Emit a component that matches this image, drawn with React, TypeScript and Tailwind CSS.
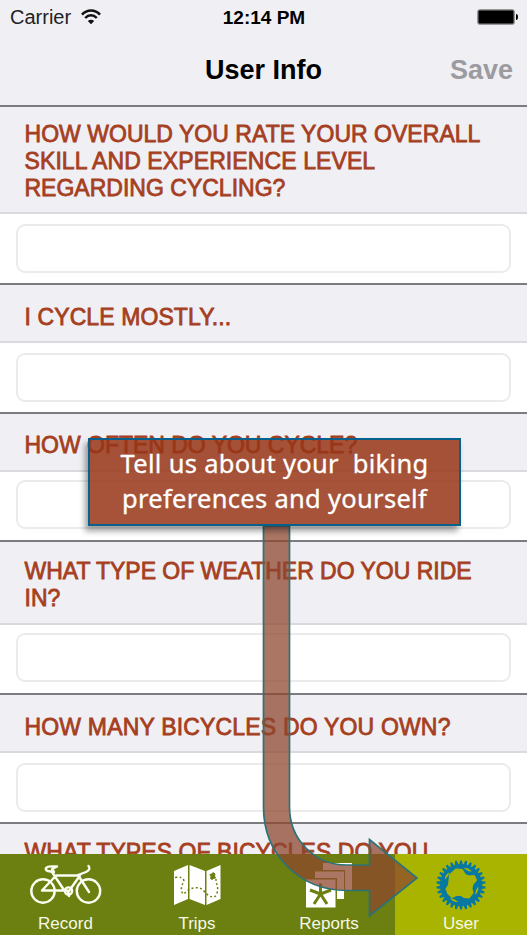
import React from "react";

type Line = { text: string; tracking: string };

type Question = {
  lines: Line[];
  band: string;
  row: string;
};

const QUESTIONS: Question[] = [
  {
    lines: [
      { text: "HOW WOULD YOU RATE YOUR OVERALL", tracking: "tracking-[0.03px]" },
      { text: "SKILL AND EXPERIENCE LEVEL", tracking: "tracking-[0.1px]" },
      { text: "REGARDING CYCLING?", tracking: "tracking-[0.01px]" },
    ],
    band: "h-[107px] pt-[14px]",
    row: "h-[71px] pt-[10px]",
  },
  {
    lines: [{ text: "I CYCLE MOSTLY...", tracking: "tracking-[0.1px]" }],
    band: "h-[58px] pt-[19px]",
    row: "h-[71px] pt-[10px]",
  },
  {
    lines: [{ text: "HOW OFTEN DO YOU CYCLE?", tracking: "tracking-[-0.02px]" }],
    band: "h-[58px] pt-[18px]",
    row: "h-[70px] pt-[8px]",
  },
  {
    lines: [
      { text: "WHAT TYPE OF WEATHER DO YOU RIDE", tracking: "tracking-[-0.02px]" },
      { text: "IN?", tracking: "tracking-normal" },
    ],
    band: "h-[83px] pt-[16px]",
    row: "h-[70px] pt-[8px]",
  },
  {
    lines: [{ text: "HOW MANY BICYCLES DO YOU OWN?", tracking: "tracking-[0.18px]" }],
    band: "h-[58px] pt-[19px]",
    row: "h-[71px] pt-[10px]",
  },
];

const HEADING =
  "bg-[#efeff4] pl-[24.5px] text-[23px] leading-[27px] text-[#a63f1f] whitespace-nowrap [-webkit-text-stroke:0.8px_#a63f1f]";

function StatusBar() {
  return (
    <div className="grid h-[35px] grid-cols-3 items-center pr-[9px] pl-[10px] text-black">
      <div className="flex items-center gap-[10px]">
        <span className="-mt-[2px] text-[20px] leading-none text-[#222]">Carrier</span>
        <svg className="-mt-[2px]" width="20" height="16" viewBox="0 0 20 16" fill="none" stroke="#111" strokeWidth="2.5">
          <path d="M1 5.7C6 .2 14 .2 19 5.7" />
          <path d="M4.2 9C7.7 5.3 12.3 5.3 15.8 9" />
          <path d="M10 15.3 6.8 12Q10 9.5 13.2 12Z" fill="#111" stroke="none" />
        </svg>
      </div>
      <span className="-mt-[1px] text-center text-[19px] font-bold leading-none whitespace-nowrap">12:14 PM</span>
      <svg className="-mt-[2px] justify-self-end" width="41" height="16" viewBox="0 0 41 16">
        <rect x=".5" y=".5" width="37" height="15" rx="2.5" fill="#888" stroke="#999" />
        <rect x="1.5" y="1.5" width="35" height="13" rx="1" />
        <path d="M39 5q2 0 2 3t-2 3Z" />
      </svg>
    </div>
  );
}

function BikeIcon() {
  return (
    <svg width="72" height="42" viewBox="0 0 72 42" fill="none" stroke="#fbfcf2" strokeWidth="2.4" strokeLinecap="round" strokeLinejoin="round">
      <circle cx="13" cy="28" r="11.7" />
      <circle cx="58.5" cy="28" r="11.7" />
      <path d="M12 27.5 26 12.5H50L39 28M12 27.5H37M34 27 22 9M59 29 48 12 56 9C60 7 60 5 58.5 3" />
      <circle cx="38.5" cy="28" r="3.6" />
      <path d="M38 28 39 33" />
      <path d="M16 5C18 2.5 21 3.5 27 3.5L22 6 24 9 18 8Q15 7 16 5Z" />
    </svg>
  );
}

function MapIcon() {
  return (
    <svg width="47" height="42" viewBox="0 0 47 42">
      <path d="M0 7 14 1V35L0 41Z M15.5 1 31 7V41L15.5 35Z M32.5 7 46.5 1V35L32.5 41Z" fill="#fff" />
      <path d="M1 13.5Q9 12 10 17C6 24 7 29 10 30 14 24 25 21 30 27 35 34 42 35 43 29 45 24 42 20 42 15" fill="none" stroke="#6b8010" strokeWidth="1.5" strokeDasharray="2 2.3" />
      <path d="M35.8 10.500 38 10l1-1.500L41 10l-.5 2L41.500 14l-2 .5L38 15.500 36.500 14.500 37 12.500Z" fill="#6b8010" stroke="#6b8010" />
    </svg>
  );
}

function ReportsIcon() {
  return (
    <svg width="48" height="46" viewBox="0 0 48 46">
      <path d="M17 0H46V27H39V7H17Z M9 8.500H38V36H31V15H9Z" fill="#fff" />
      <rect y="16.500" width="29.500" height="28" fill="#fff" />
      <path d="M14.500 31V20.500M14.500 31 4 27M14.500 31 25 27M14.500 31 8 41M14.500 31 21 41" stroke="#6b8010" strokeWidth="3" />
    </svg>
  );
}

const TEETH = Array.from({ length: 30 }, (_, i) => i * 12);
const SLOTS = [24, 110, 205, 303];

function GearIcon() {
  return (
    <svg width="50" height="50" viewBox="-25 -25 50 50">
      {TEETH.map((a) => (
        <path key={a} d="M-1.900-20-.9-24.600H.9L1.900-20Z" fill="#0778a0" transform={`rotate(${a})`} />
      ))}
      <circle r="21" fill="#0778a0" />
      <path
        d="M-5-15.500 1-15 4-10 8-8.500 13-9 15-5 11.500-1 10.500 3 11.500 8 8 12.500 3 12 0 10-5 10-9 12-13 8-14.500 4-12 0-11.500-5-11-10Z"
        fill="#a9b400"
        stroke="#a9b400"
        strokeWidth="2"
        strokeLinejoin="round"
      />
      {SLOTS.map((a) => (
        <path key={a} d="M-4.500-16.500Q0-19.400 4.500-16.500Q0-15-4.500-16.500Z" fill="#a9b400" transform={`rotate(${a})`} />
      ))}
    </svg>
  );
}

const TABS = [
  { label: "Record", icon: <BikeIcon />, style: "w-[131px] bg-[#6b8010]", pad: "pt-[9px]" },
  { label: "Trips", icon: <MapIcon />, style: "w-[132px] bg-[#6b8010]", pad: "pt-[10px]" },
  { label: "Reports", icon: <ReportsIcon />, style: "w-[132px] bg-[#6b8010]", pad: "pt-[9px] pl-[2px]" },
  { label: "User", icon: <GearIcon />, style: "w-[132px] bg-[#a9b400]", pad: "pt-[6px]" },
];

export default function App() {
  return (
    <div className="relative flex h-[935px] w-[527px] flex-col overflow-hidden bg-[#efeff4] font-['Liberation_Sans',Arial,sans-serif]">
      <header className="h-[105px] shrink-0">
        <StatusBar />
        <div className="grid h-[70px] grid-cols-3 items-center pr-[14px] pl-[14px] text-[27px] font-bold">
          <span />
          <h1 className="text-center whitespace-nowrap">User Info</h1>
          <span className="text-right text-[#9b9ba0]">Save</span>
        </div>
      </header>
      <main className="min-h-0 grow overflow-hidden">
        {QUESTIONS.map((q) => (
          <section key={q.lines[0].text}>
            <div className={`border-t-2 border-t-[#7c7c80] ${HEADING} ${q.band}`}>
              {q.lines.map((line) => (
                <div key={line.text} className={line.tracking}>
                  {line.text}
                </div>
              ))}
            </div>
            <div className={`border-t-2 border-[#dadade] bg-white px-[16px] ${q.row}`}>
              <div className="h-[49px] rounded-[9px] border-2 border-[#ebebeb] bg-white" />
            </div>
          </section>
        ))}
        <div className={`border-t-2 border-t-[#7c7c80] pt-[15px] ${HEADING}`}>
          <div className="tracking-[0.06px]">WHAT TYPES OF BICYCLES DO YOU</div>
        </div>
      </main>
      <nav className="flex h-[81px] shrink-0">
        {TABS.map((t) => (
          <div key={t.label} className={`flex flex-col items-center ${t.style}`}>
            <div className={`h-[60px] ${t.pad}`}>{t.icon}</div>
            <span className="text-[17px] leading-[20px] text-[#f6f8e8]">{t.label}</span>
          </div>
        ))}
      </nav>
      <svg className="absolute top-[526px] left-[250px]" width="180" height="409" viewBox="250 526 180 409">
        <path
          d="M263.5 526V807C263.5 855 300 890.5 347 890.5H369.5V916L417 878 369.5 839.5V865H347C314 865 289.5 839 289.5 807V526Z"
          fill="rgba(142,70,46,0.74)"
          stroke="#2b7377"
          strokeWidth="1.7"
        />
      </svg>
      <div className="absolute top-[438px] left-[88px] flex h-[88px] w-[373px] flex-col items-center border-2 border-[#07618d] bg-[rgba(150,53,22,0.85)] pt-[6px] font-['Noto_Sans',sans-serif] text-[25.5px] leading-[35px] tracking-[0.3px] text-white shadow-[-3px_5px_6px_rgba(0,0,0,0.38)] [-webkit-text-stroke:0.3px_white]">
        <span className="whitespace-pre">Tell us about your  biking</span>
        <span className="whitespace-pre">preferences and yourself</span>
      </div>
    </div>
  );
}
